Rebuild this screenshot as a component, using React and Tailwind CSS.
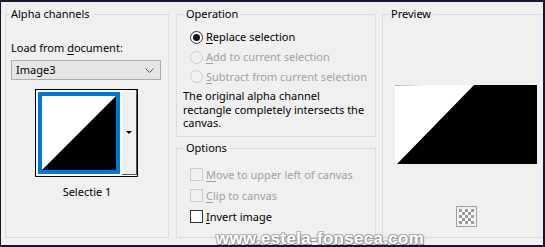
import React from "react";

function Radio({ checked, disabled }) {
  return (
    <span
      className={
        "flex h-[13px] w-[13px] shrink-0 items-center justify-center rounded-full border " +
        (disabled ? "border-[#cccccc] bg-[#f0f0f0]" : "border-[#333333] bg-white")
      }
    >
      {checked && <span className="h-[7px] w-[7px] rounded-full bg-[#1a1a1a]" />}
    </span>
  );
}

function Check({ disabled }) {
  return (
    <span
      className={
        "h-[13px] w-[13px] shrink-0 border " +
        (disabled ? "border-[#cccccc] bg-[#f0f0f0]" : "border-[#333333] bg-white")
      }
    />
  );
}

function Mn({ children }) {
  return <span className="underline underline-offset-[2px]">{children}</span>;
}

function Checker() {
  const cells = [];
  for (let r = 0; r < 5; r++) {
    for (let c = 0; c < 5; c++) {
      if ((r + c) % 2 === 0) cells.push(<rect key={r + "-" + c} x={c * 3} y={r * 3} width="3" height="3" fill="#9a9a9a" />);
    }
  }
  return (
    <svg width="15" height="15" viewBox="0 0 15 15">
      <rect width="15" height="15" fill="#ffffff" />
      {cells}
    </svg>
  );
}

export default function App() {
  return (
    <div className="relative h-[247px] w-[545px] overflow-hidden border-2 border-l-[1px] border-[#1d1330] bg-[#f0f0f0] font-['Noto_Sans',sans-serif] text-[11px] leading-[16px] text-black">
      <div className="flex w-[560px] pl-[4px] pt-[4px]">
        {/* Alpha channels */}
        <fieldset className="h-[232px] w-[164px] shrink-0 border border-[#dcdcdc] p-0">
          <legend className="ml-[3px] px-[2px]">Alpha channels</legend>
          <div className="px-[5px]">
            <div className="mt-[18px]">
              Load from <Mn>d</Mn>ocument:
            </div>
            <div className="mt-[4px] flex h-[20px] w-[150px] items-center justify-between border border-[#adadad] bg-[#e5e5e5] pl-[4px] pr-[6px]">
              <span>Image3</span>
              <svg width="9" height="5" viewBox="0 0 9 5">
                <path d="M0.5 0.5 L4.5 4.5 L8.5 0.5" fill="none" stroke="#555" strokeWidth="1" />
              </svg>
            </div>
            <div className="ml-[24px] mt-[9px] flex h-[88px] w-[103px] border border-black bg-white">
              <div className="p-[2px] pb-0">
                <div className="border-4 border-[#0078d7]">
                  <svg width="74" height="74" viewBox="0 0 74 74" className="block">
                    <rect width="74" height="74" fill="#ffffff" />
                    <polygon points="74,0 74,74 0,74" fill="#000000" />
                  </svg>
                </div>
              </div>
              <div className="mb-[1px] flex w-[17px] items-center justify-center border-b border-r border-[#555555] bg-[#f0f0f0]">
                <svg width="6" height="3" viewBox="0 0 6 3">
                  <polygon points="0,0 6,0 3,3" fill="#000" />
                </svg>
              </div>
            </div>
            <div className="mt-[7px] text-center">Selectie 1</div>
          </div>
        </fieldset>

        {/* Middle column */}
        <div className="ml-[7px] flex w-[200px] shrink-0 flex-col">
          <fieldset className="h-[131px] border border-[#dcdcdc] p-0">
            <legend className="ml-[7px] px-[2px]">Operation</legend>
            <div className="mt-[5px] pl-[13px]">
              <div className="flex h-[20px] items-center gap-[3px] whitespace-nowrap">
                <Radio checked />
                <span>
                  <Mn>R</Mn>eplace selection
                </span>
              </div>
              <div className="flex h-[20px] items-center gap-[3px] whitespace-nowrap text-[#a0a0a0]">
                <Radio disabled />
                <span>
                  <Mn>A</Mn>dd to current selection
                </span>
              </div>
              <div className="flex h-[19px] items-center gap-[3px] whitespace-nowrap text-[#a0a0a0]">
                <Radio disabled />
                <span>
                  <Mn>S</Mn>ubtract from current selection
                </span>
              </div>
            </div>
            <p className="ml-[6px] mt-[3px] whitespace-nowrap leading-[13.5px]">
              The original alpha channel
              <br />
              rectangle completely intersects the
              <br />
              canvas.
            </p>
          </fieldset>

          <fieldset className="mt-[3px] h-[98px] border border-[#dcdcdc] p-0">
            <legend className="ml-[7px] px-[2px]">Options</legend>
            <div className="mt-[8px] pl-[13px]">
              <div className="flex h-[21px] items-center gap-[3px] whitespace-nowrap text-[#a0a0a0]">
                <Check disabled />
                <span>
                  <Mn>M</Mn>ove to upper left of canvas
                </span>
              </div>
              <div className="flex h-[21px] items-center gap-[3px] whitespace-nowrap text-[#a0a0a0]">
                <Check disabled />
                <span>
                  <Mn>C</Mn>lip to canvas
                </span>
              </div>
              <div className="flex h-[21px] items-center gap-[3px] whitespace-nowrap">
                <Check />
                <span>
                  <Mn>I</Mn>nvert image
                </span>
              </div>
            </div>
          </fieldset>
        </div>

        {/* Preview */}
        <fieldset className="ml-[6px] h-[232px] w-[168px] shrink-0 border border-[#dcdcdc] p-0">
          <legend className="ml-[6px] px-[2px]">Preview</legend>
          <div className="flex flex-col items-center">
            <svg width="142" height="79" viewBox="0 0 142 79" className="mt-[63px] block shrink-0">
              <defs>
                <linearGradient id="pvfade" x1="0" y1="0" x2="1" y2="0">
                  <stop offset="0" stopColor="#b0b0b0" />
                  <stop offset="1" stopColor="#ffffff" />
                </linearGradient>
              </defs>
              <rect width="142" height="79" fill="#000000" />
              <polygon points="0,0 79,0 2,79 0,79" fill="#ffffff" />
              <rect x="0" y="0" width="30" height="1" fill="url(#pvfade)" />
            </svg>
            <div className="mt-[42px] flex h-[21px] w-[21px] items-center justify-center border border-[#a0a0a0] bg-[#f0f0f0]">
              <Checker />
            </div>
          </div>
        </fieldset>
      </div>

      <div className="absolute left-[215px] top-[227px] font-['Liberation_Sans',sans-serif] text-[17px] font-bold leading-[20px] tracking-[0.3px] text-white [text-shadow:1px_1px_0_#8a8a8a,-1px_-1px_0_#b0b0b0,1px_-1px_0_#b0b0b0,-1px_1px_0_#b0b0b0]">
        www.estela-fonseca.com
      </div>
    </div>
  );
}
